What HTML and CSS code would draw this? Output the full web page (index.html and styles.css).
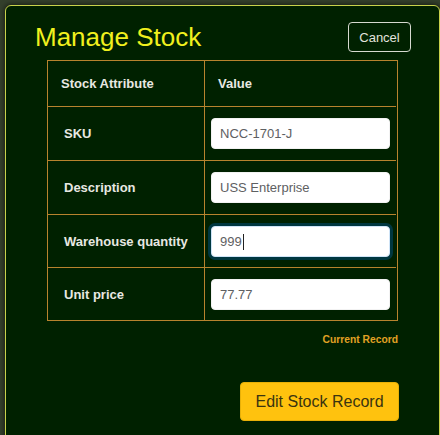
FILE: index.html
```html
<!DOCTYPE html>
<html lang="en">
<head>
<meta charset="utf-8">
<title>Manage Stock</title>
<link rel="stylesheet" href="styles.css">
</head>
<body>
<div class="dialog">
  <div class="header">
    <h1 class="title">Manage Stock</h1>
    <button class="btn-cancel" type="button">Cancel</button>
  </div>
  <div class="grid">
    <div class="cell head first">Stock Attribute</div>
    <div class="cell head">Value</div>

    <div class="cell label first">SKU</div>
    <div class="cell field"><input class="input" type="text" value="NCC-1701-J"></div>

    <div class="cell label first">Description</div>
    <div class="cell field"><input class="input" type="text" value="USS Enterprise"></div>

    <div class="cell label first">Warehouse quantity</div>
    <div class="cell field"><span class="focus-wrap"><input class="input focused" type="text" value="999"><span class="caret"></span></span></div>

    <div class="cell label first last">Unit price</div>
    <div class="cell field last"><input class="input" type="text" value="77.77"></div>
  </div>
  <div class="footnote">Current Record</div>
  <div class="actions">
    <button class="btn-edit" type="button">Edit Stock Record</button>
  </div>
</div>
</body>
</html>
```

FILE: styles.css
```css
html, body {
  margin: 0;
  padding: 0;
}
body {
  width: 440px;
  height: 435px;
  overflow: hidden;
  background: #34402c;
  padding: 5px 0 0 5px;
  box-sizing: border-box;
  font-family: "Liberation Sans", Arial, sans-serif;
}
.dialog {
  width: 435px;
  min-height: 470px;
  box-sizing: border-box;
  background: #002100;
  border: 1px solid #c8d24c;
  border-radius: 6px 6px 0 0;
  box-shadow: 0 0 5px 1px rgba(0, 0, 0, 0.55);
}
.header {
  display: flex;
  justify-content: space-between;
  align-items: center;
  height: 31px;
  padding: 16px 28px 0 29px;
}
.title {
  margin: 0;
  font-size: 26px;
  line-height: 31px;
  font-weight: normal;
  color: #f0f01e;
}
.btn-cancel {
  height: 30px;
  width: 63px;
  padding: 0;
  margin-top: -1px;
  background: transparent;
  border: 1px solid #d6d9d0;
  border-radius: 4px;
  color: #e2e2dc;
  font-family: "Liberation Sans", Arial, sans-serif;
  font-size: 13px;
}
.grid {
  display: grid;
  grid-template-columns: 157px 191px;
  grid-template-rows: 46px 54px 54px 53px 52px;
  width: 351px;
  box-sizing: border-box;
  margin: 7px auto 0;
  border: 1px solid #b8832e;
}
.cell {
  display: flex;
  align-items: center;
  border-bottom: 1px solid #b8832e;
  color: #e8e8e2;
  font-size: 13px;
  font-weight: bold;
}
.cell.first {
  border-right: 1px solid #b8832e;
}
.cell.last {
  border-bottom: none;
}
.cell.head {
  padding-left: 13px;
}
.cell.label {
  padding-left: 16px;
}
.cell.field {
  padding-left: 6px;
}
.input {
  width: 179px;
  height: 31px;
  box-sizing: border-box;
  border: 1px solid #f2f2f2;
  border-radius: 4px;
  background: #ffffff;
  padding: 0 8px;
  font-family: "Liberation Sans", Arial, sans-serif;
  font-size: 13px;
  color: #5e6062;
  outline: none;
}
.focus-wrap {
  position: relative;
  display: block;
  height: 31px;
}
.input.focused {
  border-color: #cfe4f7;
  box-shadow: 0 0 0 3px rgba(0, 123, 255, 0.25);
}
.caret {
  position: absolute;
  left: 32px;
  top: 8px;
  width: 1px;
  height: 16px;
  background: #222;
}
.footnote {
  width: 351px;
  margin: 13px auto 0;
  text-align: right;
  font-size: 10.3px;
  line-height: 12px;
  font-weight: bold;
  color: #e0a224;
}
.actions {
  width: 351px;
  margin: 36px auto 0;
  display: flex;
  justify-content: flex-end;
}
.btn-edit {
  height: 39px;
  width: 159px;
  padding: 0;
  margin-right: -1px;
  background: #ffc20e;
  border: 1px solid #e8b008;
  border-radius: 4px;
  color: #3a3410;
  font-family: "Liberation Sans", Arial, sans-serif;
  font-size: 16px;
}
```
